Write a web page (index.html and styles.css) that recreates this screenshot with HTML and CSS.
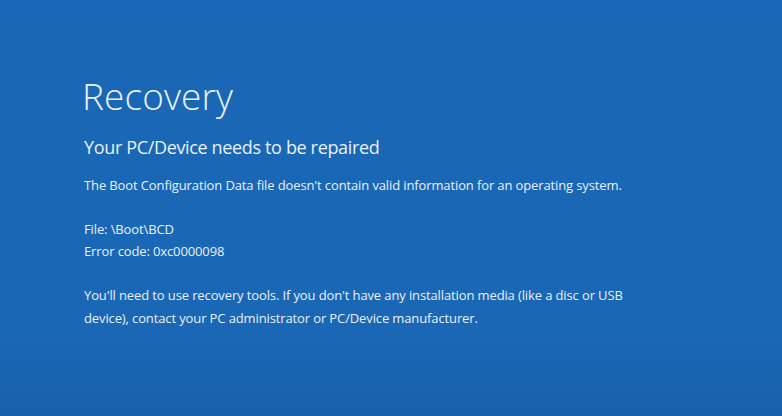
FILE: index.html
```html
<!DOCTYPE html>
<html lang="en">
<head>
    <meta charset="UTF-8">
    <meta name="viewport" content="width=device-width, initial-scale=1.0">
    <title>Recovery</title>
    <link rel="stylesheet" href="styles.css">
</head>
<body>
    <div class="screen">
        <h1>Recovery</h1>
        <h2>Your PC/Device needs to be repaired</h2>
        <p class="message">The Boot Configuration Data file doesn't contain valid information for an operating system.</p>
        <div class="details">
            <p>File: \Boot\BCD</p>
            <p>Error code: 0xc0000098</p>
        </div>
        <p class="message">You'll need to use recovery tools. If you don't have any installation media (like a disc or USB<br>device), contact your PC administrator or PC/Device manufacturer.</p>
    </div>
</body>
</html>
```

FILE: styles.css
```css
html, body {
    margin: 0;
    height: 100%;
}
body {
    font-family: "Open Sans", "Noto Sans", sans-serif;
    background: linear-gradient(to bottom, #1a67b7 0%, #1a67b6 80%, #1860ab 100%);
    color: #e9f0f9;
}
.screen {
    padding: 72px 0 0 84px;
}
h1 {
    font-size: 37px;
    font-weight: 300;
    letter-spacing: 0.1px;
    margin: 0 0 0 -2px;
    line-height: 48px;
}
h2 {
    font-size: 18px;
    font-weight: 400;
    letter-spacing: -0.35px;
    margin: 14px 0 0;
    line-height: 26px;
}
.message {
    font-size: 13px;
    letter-spacing: -0.12px;
    line-height: 23px;
    margin: 14px 0 0;
}
.details {
    margin: 21px 0 22px;
}
.details p {
    font-size: 13px;
    letter-spacing: -0.12px;
    line-height: 22px;
    margin: 0;
}
```
